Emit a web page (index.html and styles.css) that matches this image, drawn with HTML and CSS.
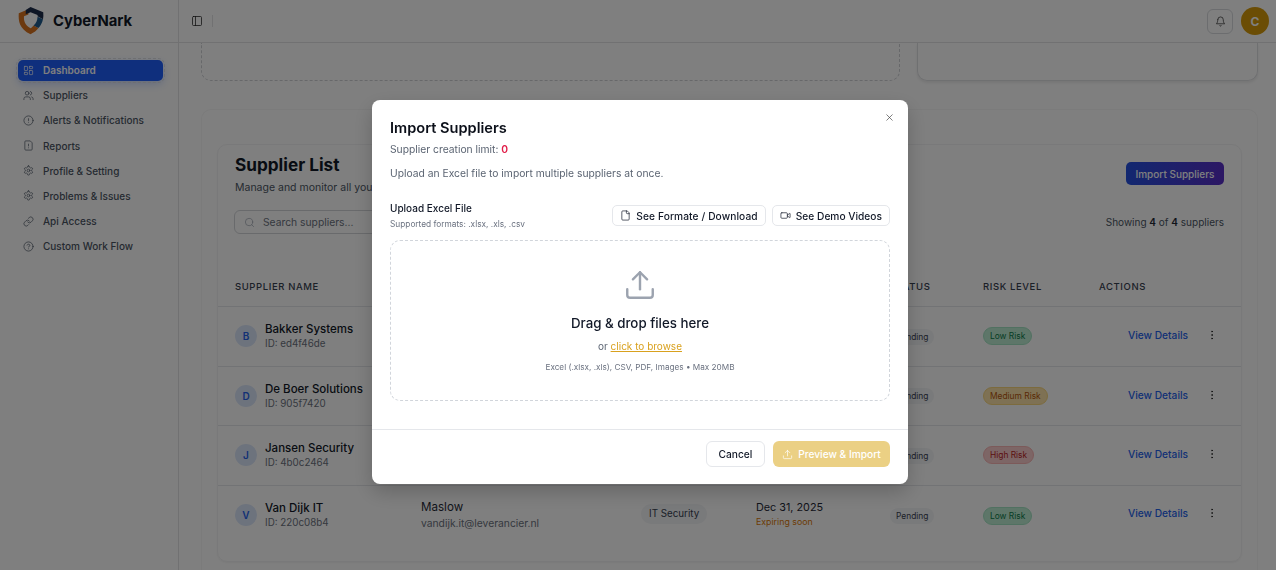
FILE: index.html
```html
<!DOCTYPE html>
<html lang="en">
<head>
  <meta charset="UTF-8">
  <title>CyberNark - Suppliers</title>
  <link rel="stylesheet" href="styles.css">
</head>
<body>
  <svg class="sprite" xmlns="http://www.w3.org/2000/svg">
    <symbol id="i-dash" viewBox="0 0 24 24"><rect x="3" y="3" width="7" height="9" rx="1"/><rect x="14" y="3" width="7" height="5" rx="1"/><rect x="14" y="12" width="7" height="9" rx="1"/><rect x="3" y="16" width="7" height="5" rx="1"/></symbol>
    <symbol id="i-users" viewBox="0 0 24 24"><path d="M16 21v-2a4 4 0 0 0-4-4H6a4 4 0 0 0-4 4v2"/><circle cx="9" cy="7" r="4"/><path d="M22 21v-2a4 4 0 0 0-3-3.87"/><path d="M16 3.13a4 4 0 0 1 0 7.75"/></symbol>
    <symbol id="i-alert" viewBox="0 0 24 24"><circle cx="12" cy="12" r="10"/><path d="M12 8v4"/><path d="M12 16h.01"/></symbol>
    <symbol id="i-report" viewBox="0 0 24 24"><path d="M15 2H6a2 2 0 0 0-2 2v16a2 2 0 0 0 2 2h12a2 2 0 0 0 2-2V7z"/><path d="M12 9v4"/><path d="M12 17h.01"/></symbol>
    <symbol id="i-gear" viewBox="0 0 24 24"><path d="M12.22 2h-.44a2 2 0 0 0-2 2v.18a2 2 0 0 1-1 1.73l-.43.25a2 2 0 0 1-2 0l-.15-.08a2 2 0 0 0-2.73.73l-.22.38a2 2 0 0 0 .73 2.73l.15.1a2 2 0 0 1 1 1.72v.51a2 2 0 0 1-1 1.74l-.15.09a2 2 0 0 0-.73 2.73l.22.38a2 2 0 0 0 2.73.73l.15-.08a2 2 0 0 1 2 0l.43.25a2 2 0 0 1 1 1.73V20a2 2 0 0 0 2 2h.44a2 2 0 0 0 2-2v-.18a2 2 0 0 1 1-1.73l.43-.25a2 2 0 0 1 2 0l.15.08a2 2 0 0 0 2.73-.73l.22-.39a2 2 0 0 0-.73-2.73l-.15-.08a2 2 0 0 1-1-1.74v-.5a2 2 0 0 1 1-1.74l.15-.09a2 2 0 0 0 .73-2.73l-.22-.38a2 2 0 0 0-2.73-.73l-.15.08a2 2 0 0 1-2 0l-.43-.25a2 2 0 0 1-1-1.73V4a2 2 0 0 0-2-2z"/><circle cx="12" cy="12" r="3"/></symbol>
    <symbol id="i-link" viewBox="0 0 24 24"><path d="M10 13a5 5 0 0 0 7.54.54l3-3a5 5 0 0 0-7.07-7.07l-1.72 1.71"/><path d="M14 11a5 5 0 0 0-7.54-.54l-3 3a5 5 0 0 0 7.07 7.07l1.71-1.71"/></symbol>
    <symbol id="i-help" viewBox="0 0 24 24"><circle cx="12" cy="12" r="10"/><path d="M9.09 9a3 3 0 0 1 5.83 1c0 2-3 3-3 3"/><path d="M12 17h.01"/></symbol>
    <symbol id="i-panel" viewBox="0 0 24 24"><rect x="3" y="3" width="18" height="18" rx="2"/><path d="M9 3v18"/></symbol>
    <symbol id="i-bell" viewBox="0 0 24 24"><path d="M6 8a6 6 0 0 1 12 0c0 7 3 9 3 9H3s3-2 3-9"/><path d="M10.3 21a1.94 1.94 0 0 0 3.4 0"/></symbol>
    <symbol id="i-search" viewBox="0 0 24 24"><circle cx="11" cy="11" r="8"/><path d="m21 21-4.3-4.3"/></symbol>
    <symbol id="i-file" viewBox="0 0 24 24"><path d="M15 2H6a2 2 0 0 0-2 2v16a2 2 0 0 0 2 2h12a2 2 0 0 0 2-2V7z"/><path d="M14 2v4a2 2 0 0 0 2 2h4"/></symbol>
    <symbol id="i-video" viewBox="0 0 24 24"><path d="m16 13 5.2 3.5a.5.5 0 0 0 .8-.4V7.9a.5.5 0 0 0-.8-.4L16 11"/><rect x="2" y="6" width="14" height="12" rx="2"/></symbol>
    <symbol id="i-upload" viewBox="0 0 24 24"><path d="M21 15v4a2 2 0 0 1-2 2H5a2 2 0 0 1-2-2v-4"/><path d="m17 8-5-5-5 5"/><path d="M12 3v12"/></symbol>
    <symbol id="i-x" viewBox="0 0 24 24"><path d="M18 6 6 18"/><path d="m6 6 12 12"/></symbol>
    <symbol id="i-dots" viewBox="0 0 24 24"><circle cx="12" cy="5" r="1"/><circle cx="12" cy="12" r="1"/><circle cx="12" cy="19" r="1"/></symbol>
  </svg>

  <div class="app">
    <aside class="sidebar">
      <div class="brand">
        <svg class="logo" viewBox="0 0 30 32">
          <path d="M12 2.500 1 7c-.6 9 .6 18 13.500 24 4-1.800 7-4 9-7l-5.500-3c-1.500 1.800-2.500 2.700-3.500 3.200C8 21 6.500 15 7 10.500l5-2z" fill="#d8731f"/>
          <path d="M14.500 0 29 6c.3 3 .2 5.700-.3 8l-6.200-3.500V9L14.500 6 9 8.200 9 3.500z" fill="#1c2c4a"/>
          <path d="M22.500 11 28.700 14c-.8 4-2.700 7.500-5.200 10l-5.500-3c2.800-2.500 4.300-5.500 4.500-10z" fill="#1f5a8c"/>
        </svg>
        <span class="brand-name">CyberNark</span>
      </div>
      <nav class="nav">
        <a class="nav-item active"><svg class="ico"><use href="#i-dash"/></svg>Dashboard</a>
        <a class="nav-item"><svg class="ico"><use href="#i-users"/></svg>Suppliers</a>
        <a class="nav-item"><svg class="ico"><use href="#i-alert"/></svg>Alerts &amp; Notifications</a>
        <a class="nav-item"><svg class="ico"><use href="#i-report"/></svg>Reports</a>
        <a class="nav-item"><svg class="ico"><use href="#i-gear"/></svg>Profile &amp; Setting</a>
        <a class="nav-item"><svg class="ico"><use href="#i-gear"/></svg>Problems &amp; Issues</a>
        <a class="nav-item"><svg class="ico"><use href="#i-link"/></svg>Api Access</a>
        <a class="nav-item"><svg class="ico"><use href="#i-help"/></svg>Custom Work Flow</a>
      </nav>
    </aside>

    <div class="main">
      <header class="topbar">
        <svg class="ico panel-ico"><use href="#i-panel"/></svg>
        <span class="topbar-sep"></span>
        <button class="bell"><svg class="ico"><use href="#i-bell"/></svg></button>
        <span class="avatar">C</span>
      </header>

      <div class="content">
        <div class="top-cards">
          <div class="top-card dashed"></div>
          <div class="top-card solid"></div>
        </div>

        <section class="section">
          <div class="list-card">
            <div class="list-head">
              <div>
                <h2>Supplier List</h2>
                <p>Manage and monitor all your suppliers</p>
              </div>
              <button class="btn-import">Import Suppliers</button>
            </div>
            <div class="list-tools">
              <label class="search"><svg class="ico"><use href="#i-search"/></svg><span>Search suppliers...</span></label>
              <span class="showing">Showing <b>4</b> of <b>4</b> suppliers</span>
            </div>

            <div class="row row-head">
              <div>SUPPLIER NAME</div><div></div><div></div><div></div><div>STATUS</div><div>RISK LEVEL</div><div>ACTIONS</div>
            </div>

            <div class="row">
              <div class="sup"><span class="letter">B</span><div><div class="sup-name">Bakker Systems</div><div class="sup-id">ID: ed4f46de</div></div></div>
              <div></div><div></div><div></div>
              <div><span class="pill grey">Pending</span></div>
              <div><span class="pill low">Low Risk</span></div>
              <div class="acts"><a>View Details</a><svg class="ico"><use href="#i-dots"/></svg></div>
            </div>
            <div class="row">
              <div class="sup"><span class="letter">D</span><div><div class="sup-name">De Boer Solutions</div><div class="sup-id">ID: 905f7420</div></div></div>
              <div></div><div></div><div></div>
              <div><span class="pill grey">Pending</span></div>
              <div><span class="pill med">Medium Risk</span></div>
              <div class="acts"><a>View Details</a><svg class="ico"><use href="#i-dots"/></svg></div>
            </div>
            <div class="row">
              <div class="sup"><span class="letter">J</span><div><div class="sup-name">Jansen Security</div><div class="sup-id">ID: 4b0c2464</div></div></div>
              <div></div><div></div><div></div>
              <div><span class="pill grey">Pending</span></div>
              <div><span class="pill high">High Risk</span></div>
              <div class="acts"><a>View Details</a><svg class="ico"><use href="#i-dots"/></svg></div>
            </div>
            <div class="row last">
              <div class="sup"><span class="letter">V</span><div><div class="sup-name">Van Dijk IT</div><div class="sup-id">ID: 220c08b4</div></div></div>
              <div><div class="contact">Maslow</div><div class="mail">vandijk.it@leverancier.nl</div></div>
              <div><span class="pill cat">IT Security</span></div>
              <div><div class="contact date">Dec 31, 2025</div><div class="expiring">Expiring soon</div></div>
              <div><span class="pill grey">Pending</span></div>
              <div><span class="pill low">Low Risk</span></div>
              <div class="acts"><a>View Details</a><svg class="ico"><use href="#i-dots"/></svg></div>
            </div>
          </div>
        </section>
      </div>
    </div>
  </div>

  <div class="overlay">
    <div class="modal">
      <svg class="ico close"><use href="#i-x"/></svg>
      <div class="modal-body">
        <h3>Import Suppliers</h3>
        <p class="limit">Supplier creation limit: <b>0</b></p>
        <p class="intro">Upload an Excel file to import multiple suppliers at once.</p>

        <div class="upload-head">
          <div>
            <div class="upload-title">Upload Excel File</div>
            <div class="upload-sub">Supported formats: .xlsx, .xls, .csv</div>
          </div>
          <div class="upload-btns">
            <button class="btn-small wide"><svg class="ico"><use href="#i-file"/></svg>See Formate / Download</button>
            <button class="btn-small"><svg class="ico"><use href="#i-video"/></svg>See Demo Videos</button>
          </div>
        </div>

        <div class="dropzone">
          <svg class="ico drop-ico"><use href="#i-upload"/></svg>
          <div class="drop-title">Drag &amp; drop files here</div>
          <div class="drop-or">or <a>click to browse</a></div>
          <div class="drop-note">Excel (.xlsx, .xls), CSV, PDF, Images • Max 20MB</div>
        </div>
      </div>
      <div class="modal-foot">
        <button class="btn-cancel">Cancel</button>
        <button class="btn-preview"><svg class="ico"><use href="#i-upload"/></svg>Preview &amp; Import</button>
      </div>
    </div>
  </div>
</body>
</html>
```

FILE: styles.css
```css
* {
  box-sizing: border-box;
}
html, body {
  margin: 0;
  height: 570px;
  overflow: hidden;
}
body {
  font-family: Inter, "Open Sans", sans-serif;
  background: #fff;
  color: #111827;
}
h2, h3, p {
  margin: 0;
}
button {
  font-family: inherit;
  cursor: pointer;
}
.sprite {
  display: none;
}
.ico {
  width: 14px;
  height: 14px;
  flex: none;
  fill: none;
  stroke: currentColor;
  stroke-width: 1.5;
  stroke-linecap: round;
  stroke-linejoin: round;
}
.app {
  display: flex;
  height: 570px;
}

/* sidebar */
.sidebar {
  width: 179px;
  flex: none;
  border-right: 1px solid #e2e3e5;
}
.brand {
  height: 43px;
  display: flex;
  align-items: center;
  gap: 8px;
  padding-left: 17px;
  border-bottom: 1px solid #e2e3e5;
}
.logo {
  width: 28px;
  height: 28px;
}
.brand-name {
  font-size: 14.8px;
  font-weight: 700;
}
.nav {
  padding: 17px 0 0 18px;
}
.nav-item {
  width: 145px;
  height: 21px;
  margin-bottom: 4.2px;
  display: flex;
  align-items: center;
  gap: 9px;
  padding-left: 5px;
  padding-bottom: 1px;
  border-radius: 5px;
  font-size: 10px;
  font-weight: 500;
  color: #4b5563;
  white-space: nowrap;
}
.nav-item .ico {
  width: 11px;
  height: 11px;
}
.nav-item.active {
  background: #1e5efb;
  color: #fff;
  font-weight: 600;
  outline: 1px dashed #dcdee3;
  outline-offset: 1px;
  box-shadow: 0 3px 8px rgba(30, 94, 251, 0.25);
}

/* top bar */
.main {
  flex: 1;
  min-width: 0;
}
.topbar {
  height: 43px;
  display: flex;
  align-items: center;
  padding: 0 7px 0 12px;
  border-bottom: 1px solid #e2e3e5;
}
.panel-ico {
  width: 12px;
  height: 12px;
  color: #222;
}
.topbar-sep {
  width: 1px;
  height: 12px;
  margin-left: 9px;
  background: #e2e3e5;
}
.bell {
  width: 26px;
  height: 25px;
  margin-left: auto;
  padding: 0;
  display: flex;
  align-items: center;
  justify-content: center;
  background: #fff;
  border: 1px solid #d8dade;
  border-radius: 6px;
  color: #222;
}
.bell .ico {
  width: 11px;
  height: 11px;
}
.avatar {
  width: 28px;
  height: 28px;
  margin-left: 8px;
  display: flex;
  align-items: center;
  justify-content: center;
  border-radius: 50%;
  background: #d69a0a;
  color: #fff;
  font-size: 12px;
  font-weight: 700;
}

/* page */
.content {
  padding: 0 18px 0 22px;
}
.top-cards {
  display: flex;
  gap: 17px;
}
.top-card {
  height: 38px;
  border-radius: 0 0 10px 10px;
}
.top-card.dashed {
  width: 699px;
  border: 1px dashed #cfd1d5;
  border-top: 0;
}
.top-card.solid {
  flex: 1;
  border: 1px solid #dfe0e3;
  border-top: 0;
  box-shadow: 0 2px 3px rgba(0, 0, 0, 0.08);
}
.section {
  margin-top: 28px;
  height: 470px;
  padding: 34px 15px 0;
  border: 1px solid #f6f6f6;
  border-bottom: 0;
  border-radius: 10px 10px 0 0;
}
.list-card {
  height: 418px;
  border: 1px solid #f3f3f4;
  border-radius: 10px;
  box-shadow: 0 1px 2px rgba(0, 0, 0, 0.05);
}
.list-head {
  display: flex;
  justify-content: space-between;
  align-items: flex-start;
  padding: 8px 17px 0 17px;
}
.list-head h2 {
  margin-bottom: 2px;
  font-size: 17.2px;
  font-weight: 700;
  line-height: 24px;
}
.list-head p {
  font-size: 10.5px;
  color: #4b5563;
  line-height: 18px;
  white-space: nowrap;
}
.btn-import {
  height: 23px;
  width: 98px;
  margin-top: 9px;
  padding: 0;
  border: 0;
  border-radius: 5px;
  background: linear-gradient(90deg, #2450e0, #5a2fc8);
  color: #fff;
  font-size: 10px;
  font-weight: 500;
}
.list-tools {
  display: flex;
  justify-content: space-between;
  align-items: center;
  padding: 13px 17px 0 16px;
}
.search {
  width: 200px;
  height: 24px;
  display: flex;
  align-items: center;
  gap: 8px;
  padding-left: 9px;
  border: 1px solid #d3d5d9;
  border-radius: 6px;
  font-size: 10.3px;
  color: #6b7280;
}
.search .ico {
  width: 11px;
  height: 11px;
  color: #9ca3af;
}
.showing {
  font-size: 10px;
  color: #4b5563;
}
.showing b {
  font-weight: 600;
  color: #1f2937;
}
.row {
  display: grid;
  grid-template-columns: 186px 220px 115px 134px 93px 116px 1fr;
  align-items: center;
  height: 59.5px;
  padding-left: 17px;
  border-top: 1px solid #e5e7eb;
}
.row-head {
  height: 39px;
  margin-top: 33px;
  padding-bottom: 1px;
  border-top: 0;
  font-size: 9.5px;
  font-weight: 500;
  letter-spacing: 0.6px;
  color: #374151;
}
.row.last {
  height: 76px;
  padding-bottom: 17px;
}
.sup {
  display: flex;
  align-items: center;
  gap: 8px;
}
.letter {
  width: 22px;
  height: 22px;
  flex: none;
  display: flex;
  align-items: center;
  justify-content: center;
  border-radius: 50%;
  background: #dbe6fb;
  color: #2563eb;
  font-size: 10px;
  font-weight: 600;
}
.sup-name {
  font-size: 11.5px;
  font-weight: 500;
  line-height: 16px;
  white-space: nowrap;
}
.sup-id {
  font-size: 9.8px;
  color: #6b7280;
  line-height: 14px;
  white-space: nowrap;
}
.contact {
  font-size: 11.6px;
  line-height: 15px;
  color: #1f2937;
}
.contact.date {
  margin-top: -2px;
  font-size: 10.8px;
}
.mail {
  margin-top: 1px;
  font-size: 10.3px;
  line-height: 14px;
  color: #6b7280;
  white-space: nowrap;
}
.expiring {
  font-size: 8.8px;
  color: #d97706;
  line-height: 13px;
}
.pill {
  display: inline-block;
  margin-bottom: 4px;
  padding: 2px 6px;
  border-radius: 10px;
  font-size: 8.4px;
  line-height: 12px;
  white-space: nowrap;
}
.row.last .pill {
  margin-bottom: 2px;
}
.grey {
  background: #f3f4f6;
  color: #374151;
}
.row.last .cat {
  margin-bottom: 4px;
  padding: 4px 8px;
  font-size: 9.8px;
  background: #f3f4f6;
  color: #374151;
}
.low {
  background: #bcecd3;
  border: 1px solid #a3e3c2;
  color: #0b7a48;
}
.med {
  background: #fce3a8;
  border: 1px solid #f8d67c;
  color: #b4540a;
}
.high {
  background: #fbcccc;
  border: 1px solid #f9b4b4;
  color: #b91c1c;
}
.acts {
  display: flex;
  align-items: center;
  margin-bottom: 2px;
  padding-left: 29px;
  font-size: 10.2px;
  font-weight: 500;
  color: #2563eb;
}
.row.last .acts {
  margin-bottom: 4px;
}
.acts .ico {
  width: 12px;
  height: 12px;
  margin-left: 18px;
  color: #222;
}

/* modal */
.overlay {
  position: fixed;
  inset: 0;
  padding: 100px 0 0 372px;
  background: rgba(0, 0, 0, 0.5);
  backdrop-filter: blur(0.5px);
}
.modal {
  position: relative;
  width: 536px;
  height: 384px;
  background: #fff;
  border-radius: 8px;
  box-shadow: 0 8px 20px rgba(0, 0, 0, 0.2);
}
.close {
  position: absolute;
  top: 12px;
  right: 13px;
  width: 11px;
  height: 11px;
  color: #444;
}
.modal-body {
  height: 330px;
  padding: 18px 18px 0;
  border-bottom: 1px solid #e5e7eb;
}
.modal-body h3 {
  font-size: 14.6px;
  font-weight: 600;
  line-height: 20px;
  color: #0b0f19;
}
.limit {
  margin-top: 4px;
  font-size: 10.3px;
  line-height: 15px;
  color: #5b6472;
}
.limit b {
  color: #e11d48;
  font-weight: 600;
}
.intro {
  margin-top: 9px;
  font-size: 10.3px;
  line-height: 15px;
  color: #5b6472;
}
.upload-head {
  margin-top: 17px;
  height: 41px;
  display: flex;
  justify-content: space-between;
}
.upload-title {
  margin-top: 3px;
  font-size: 10px;
  font-weight: 500;
  line-height: 15px;
}
.upload-sub {
  margin-top: 1px;
  font-size: 8.3px;
  line-height: 14px;
  color: #6b7280;
}
.upload-btns {
  display: flex;
  gap: 6px;
  margin-top: 7px;
}
.btn-small {
  height: 21px;
  display: flex;
  align-items: center;
  gap: 5px;
  padding: 0 7px;
  background: #fff;
  border: 1px solid #e5e7eb;
  border-radius: 5px;
  font-size: 10.2px;
  font-weight: 500;
  color: #111827;
  white-space: nowrap;
}
.btn-small.wide {
  letter-spacing: 0.1px;
}
.btn-small .ico {
  width: 11px;
  height: 11px;
}
.dropzone {
  margin-top: 1px;
  height: 161px;
  display: flex;
  flex-direction: column;
  align-items: center;
  border: 1px dashed #d1d5db;
  border-radius: 10px;
}
.drop-ico {
  margin-top: 27px;
  width: 34px;
  height: 34px;
  color: #9ca3af;
  stroke-width: 1.7;
}
.drop-title {
  margin-top: 12px;
  font-size: 13.3px;
  font-weight: 500;
  line-height: 18px;
}
.drop-or {
  margin-top: 7px;
  font-size: 10px;
  line-height: 15px;
  color: #5b6472;
}
.drop-or a {
  color: #d9a11e;
  text-decoration: underline;
}
.drop-note {
  margin-top: 6px;
  font-size: 8.2px;
  line-height: 14px;
  color: #6b7280;
}
.modal-foot {
  display: flex;
  justify-content: flex-end;
  gap: 8px;
  padding: 11px 18px 0;
}
.btn-cancel {
  width: 59px;
  height: 26px;
  padding: 0;
  background: #fff;
  border: 1px solid #e5e7eb;
  border-radius: 6px;
  font-size: 10.2px;
  font-weight: 500;
  color: #111827;
}
.btn-preview {
  width: 117px;
  height: 26px;
  display: flex;
  align-items: center;
  justify-content: center;
  gap: 5px;
  padding: 0;
  border: 0;
  border-radius: 6px;
  background: #d8a10a;
  opacity: 0.5;
  font-size: 10.2px;
  font-weight: 500;
  color: #fff;
}
.btn-preview .ico {
  width: 11px;
  height: 11px;
}
```
